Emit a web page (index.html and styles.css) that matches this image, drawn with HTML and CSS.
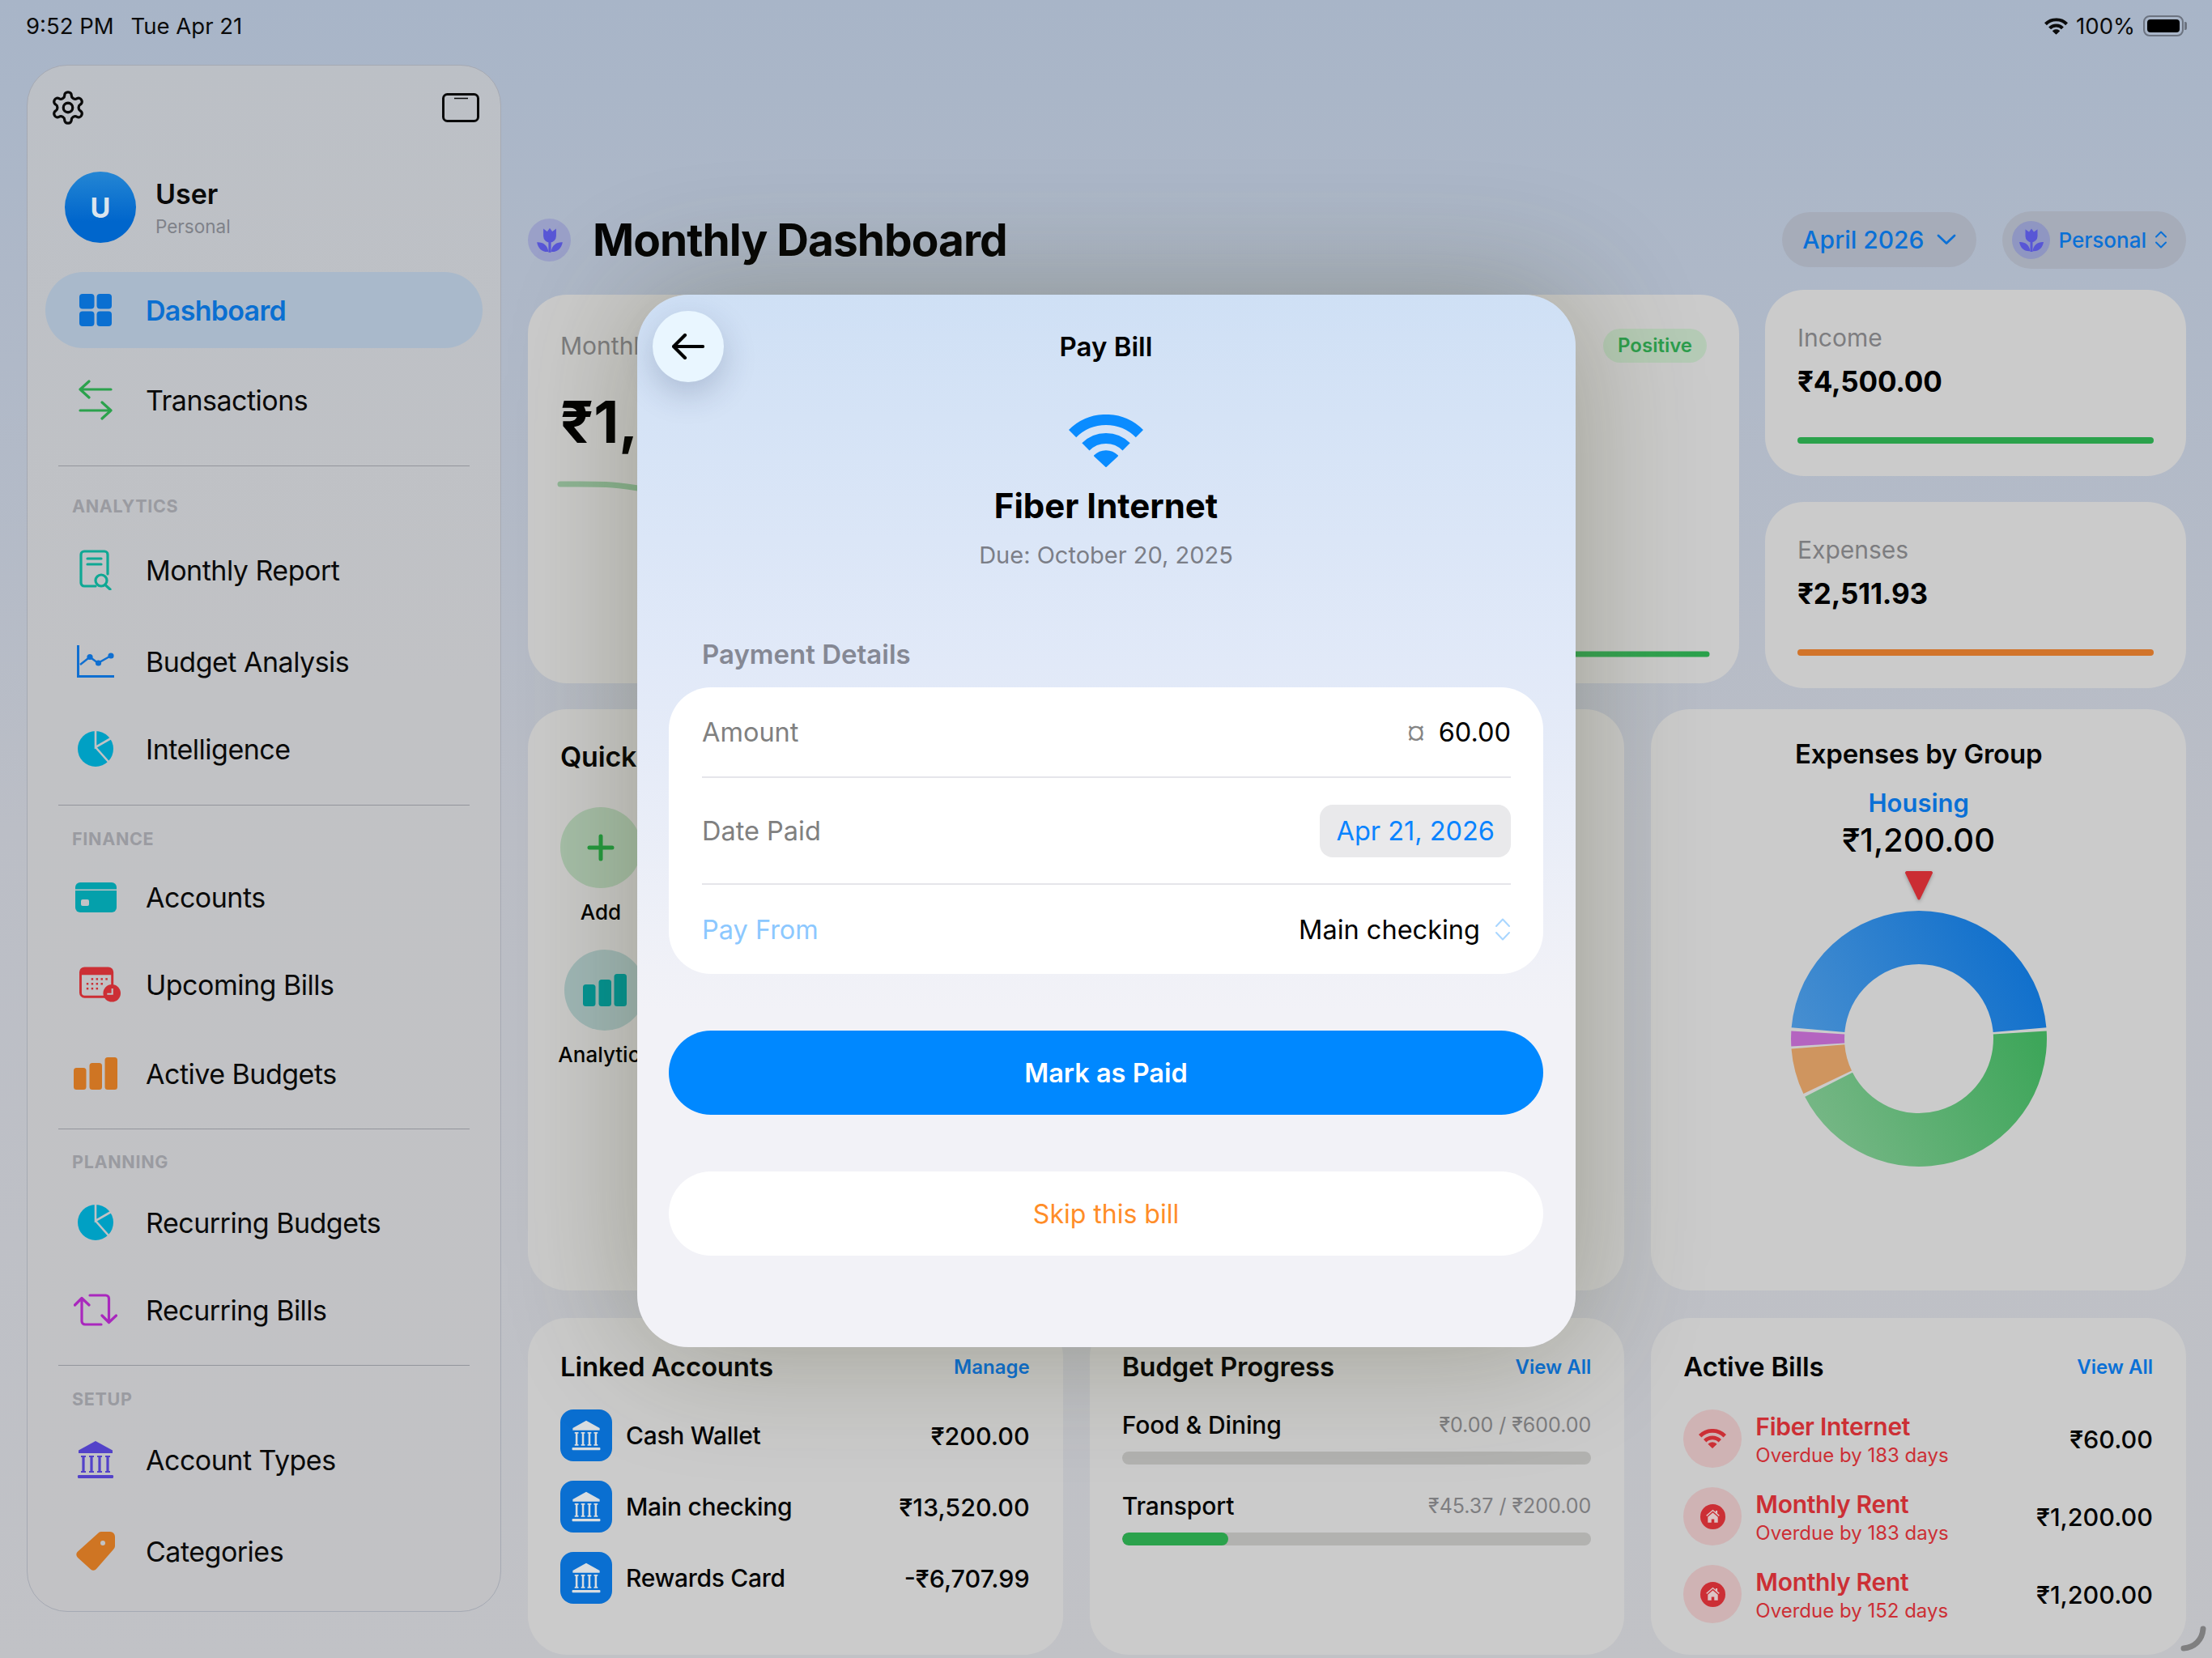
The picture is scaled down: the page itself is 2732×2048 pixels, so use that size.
FILE: index.html
```html
<!DOCTYPE html>
<html lang="en">
<head>
  <meta charset="UTF-8">
  <title>Monthly Dashboard - Pay Bill</title>
  <link rel="stylesheet" href="styles.css">
</head>
<body>

  <svg class="sprite" aria-hidden="true">
    <symbol id="wifi" viewBox="0 0 92 65">
      <path d="M4.6 23.6A58.5 58.5 0 0 1 87.4 23.6M20.9 39.9A35.5 35.5 0 0 1 71.1 39.9" fill="none" stroke="currentColor" stroke-width="13"/>
      <path d="M46 64L32 50.9A20 20 0 0 1 60 50.9Z" fill="currentColor" stroke="currentColor" stroke-width="2" stroke-linejoin="round"/>
    </symbol>
    <symbol id="tulip" viewBox="0 0 24 24">
      <path fill="currentColor" d="M7 3.5l3 2.2L12 3l2 2.7 3-2.2v5.7a5 5 0 0 1-10 0z"/>
      <rect fill="currentColor" x="11" y="13" width="2" height="9"/>
      <path fill="currentColor" d="M2 14c4.5-.3 8.300 2 9 7.5-5 .4-8-2.500-9-7.500zM22 14c-4.500-.3-8.300 2-9 7.500 5 .4 8-2.500 9-7.500z"/>
    </symbol>
    <symbol id="bank" viewBox="0 0 24 24">
      <path fill="currentColor" d="M12 .5l10.500 5.800V8H1.500V6.300z"/>
      <path fill="currentColor" d="M3 9.500h3v1H5.300v8.500H6v1H3v-1h.7v-8.500H3zM8 9.500h3v1h-.7v8.500h.7v1H8v-1h.7v-8.500H8zM13 9.500h3v1h-.7v8.500h.7v1h-3v-1h.7v-8.500H13zM18 9.500h3v1h-.7v8.500h.7v1h-3v-1h.7v-8.500H18z"/>
      <rect fill="currentColor" x="1" y="21.500" width="22" height="2" rx=".6"/>
    </symbol>
    <symbol id="pie" viewBox="0 0 44 44">
      <circle cx="22" cy="22" r="22" fill="currentColor"/>
      <path d="M22 0V20L41 9M22 20L38 38" fill="none" stroke="#c1c2c5" stroke-width="2.6"/>
    </symbol>
    <symbol id="bars" viewBox="0 0 54 40">
      <rect fill="currentColor" y="13" width="15.5" height="27" rx="3.5"/>
      <rect fill="currentColor" x="19.5" y="7" width="15.5" height="33" rx="3.5"/>
      <rect fill="currentColor" x="38.5" width="15.5" height="40" rx="3.5"/>
    </symbol>
    <symbol id="home" viewBox="0 0 30 30">
      <circle cx="15" cy="15" r="15" fill="currentColor"/>
      <path fill="#dcc4c5" d="M15 6.500l3.400 2.900V7.800h2v3.300l2.600 2.300-.9 1-7.100-6.100-7.100 6.100-.9-1zM9 15.200l6-5.100 6 5.100V22h-4.300v-4.200h-3.400V22H9z"/>
    </symbol>
  </svg>

  <div class="status-bar">
    <div class="status-left"><span>9:52 PM</span><span>Tue Apr 21</span></div>
    <div class="status-right">
      <svg class="status-wifi" viewBox="0 0 92 65"><use href="#wifi"/></svg>
      <span>100%</span>
      <div class="battery"><div class="battery-fill"></div></div>
    </div>
  </div>

  <div class="layout">

    <!-- Sidebar -->
    <aside class="sidebar">
      <div class="side-top">
        <svg class="gear" viewBox="0 0 24 24" fill="none" stroke="#0a0a0a" stroke-width="1.7" stroke-linejoin="round">
          <path d="M12.22 2h-.44a2 2 0 0 0-2 2v.18a2 2 0 0 1-1 1.73l-.43.25a2 2 0 0 1-2 0l-.15-.08a2 2 0 0 0-2.73.73l-.22.38a2 2 0 0 0 .73 2.73l.15.1a2 2 0 0 1 1 1.72v.51a2 2 0 0 1-1 1.74l-.15.09a2 2 0 0 0-.73 2.73l.22.38a2 2 0 0 0 2.73.73l.15-.08a2 2 0 0 1 2 0l.43.25a2 2 0 0 1 1 1.73V20a2 2 0 0 0 2 2h.44a2 2 0 0 0 2-2v-.18a2 2 0 0 1 1-1.73l.43-.25a2 2 0 0 1 2 0l.15.08a2 2 0 0 0 2.73-.73l.22-.39a2 2 0 0 0-.73-2.73l-.15-.08a2 2 0 0 1-1-1.74v-.5a2 2 0 0 1 1-1.74l.15-.09a2 2 0 0 0 .73-2.73l-.22-.38a2 2 0 0 0-2.73-.73l-.15.08a2 2 0 0 1-2 0l-.43-.25a2 2 0 0 1-1-1.73V4a2 2 0 0 0-2-2z"/>
          <circle cx="12" cy="12" r="3"/>
        </svg>
        <svg class="side-toggle" viewBox="0 0 46 36" fill="none" stroke="#0a0a0a">
          <rect x="1.5" y="1.5" width="43" height="33" rx="5" stroke-width="3"/>
          <path d="M15 6.5H32" stroke-width="1.5"/>
        </svg>
      </div>

      <div class="profile">
        <div class="avatar">U</div>
        <div>
          <div class="profile-name">User</div>
          <div class="profile-sub">Personal</div>
        </div>
      </div>

      <div class="nav-item nav-active">
        <div class="nav-icon">
          <svg width="40" height="40" viewBox="0 0 40 40" fill="#0a6fd1">
            <rect width="18.5" height="18.5" rx="4"/><rect x="21.5" width="18.5" height="18.5" rx="4"/>
            <rect y="21.5" width="18.5" height="18.5" rx="4"/><rect x="21.5" y="21.5" width="18.5" height="18.5" rx="4"/>
          </svg>
        </div>
        <span>Dashboard</span>
      </div>
      <div class="nav-item nav-transactions">
        <div class="nav-icon">
          <svg width="42" height="50" viewBox="0 0 42 50" fill="none" stroke="#2ba24c" stroke-width="3.2" stroke-linecap="round" stroke-linejoin="round">
            <path d="M40 12H2M13 2L2 12 13 22M2 38H40M29 28L40 38 29 48"/>
          </svg>
        </div>
        <span>Transactions</span>
      </div>

      <hr class="nav-rule nav-rule-first">
      <div class="nav-label label-analytics">ANALYTICS</div>
      <div class="nav-item">
        <div class="nav-icon">
          <svg width="40" height="50" viewBox="0 0 40 50" fill="none" stroke="#0fa894" stroke-width="3.2" stroke-linecap="round" stroke-linejoin="round">
            <path d="M20 45H6a4 4 0 0 1-4-4V6a4 4 0 0 1 4-4h25a4 4 0 0 1 4 4v24"/>
            <path d="M10 11H27M10 18H27"/>
            <circle cx="27" cy="38" r="7"/>
            <path d="M32 43.5L38 49"/>
          </svg>
        </div>
        <span>Monthly Report</span>
      </div>
      <div class="nav-item nav-gap-5">
        <div class="nav-icon">
          <svg width="46" height="40" viewBox="0 0 46 40" fill="none" stroke="#0f6fd1" stroke-width="3">
            <path d="M1.5 0V38.500H46"/>
            <path d="M4 24L16 14.500 26 22 42 13" stroke-width="2.4"/>
            <g fill="#0f6fd1" stroke="none"><circle cx="16" cy="14.500" r="3.600"/><circle cx="26.500" cy="22" r="3.600"/><circle cx="42" cy="13" r="3.600"/></g>
          </svg>
        </div>
        <span>Budget Analysis</span>
      </div>
      <div class="nav-item">
        <div class="nav-icon"><svg class="icon-pie" viewBox="0 0 44 44"><use href="#pie"/></svg></div>
        <span>Intelligence</span>
      </div>

      <hr class="nav-rule nav-rule-wide">
      <div class="nav-label label-finance">FINANCE</div>
      <div class="nav-item">
        <div class="nav-icon">
          <svg width="51" height="37" viewBox="0 0 51 37">
            <rect width="51" height="37" rx="6" fill="#04a0ab"/>
            <rect y="8.5" width="51" height="1.5" fill="#c1c2c5"/>
            <rect x="7" y="21" width="10" height="8" rx="2" fill="#c1c2c5"/>
          </svg>
        </div>
        <span>Accounts</span>
      </div>
      <div class="nav-item">
        <div class="nav-icon nav-icon-shift">
          <svg width="52" height="44" viewBox="0 0 52 44">
            <rect x="1.5" y="1.5" width="40" height="36" rx="5" fill="none" stroke="#cc2f35" stroke-width="3"/>
            <path d="M5 1.500h33a4 4 0 0 1 4 4V10H1V5.500a4 4 0 0 1 4-4z" fill="#cc2f35"/>
            <g fill="#cc2f35">
              <rect x="15" y="14" width="2.5" height="2.5"/><rect x="21" y="14" width="2.5" height="2.5"/><rect x="27" y="14" width="2.5" height="2.5"/><rect x="33" y="14" width="2.5" height="2.5"/>
              <rect x="9" y="20" width="2.5" height="2.5"/><rect x="15" y="20" width="2.5" height="2.5"/><rect x="21" y="20" width="2.5" height="2.5"/><rect x="27" y="20" width="2.5" height="2.5"/>
              <rect x="9" y="26" width="2.5" height="2.5"/><rect x="15" y="26" width="2.5" height="2.5"/><rect x="21" y="26" width="2.5" height="2.5"/>
            </g>
            <circle cx="41" cy="33" r="11" fill="#cc2f35"/>
            <path d="M41.5 27V34H35" fill="none" stroke="#c1c2c5" stroke-width="2.2"/>
          </svg>
        </div>
        <span>Upcoming Bills</span>
      </div>
      <div class="nav-item nav-gap-2">
        <div class="nav-icon"><svg class="icon-bars" viewBox="0 0 54 40"><use href="#bars"/></svg></div>
        <span>Active Budgets</span>
      </div>

      <hr class="nav-rule">
      <div class="nav-label label-planning">PLANNING</div>
      <div class="nav-item">
        <div class="nav-icon"><svg class="icon-pie" viewBox="0 0 44 44"><use href="#pie"/></svg></div>
        <span>Recurring Budgets</span>
      </div>
      <div class="nav-item">
        <div class="nav-icon">
          <svg width="54" height="40" viewBox="0 0 54 40" fill="none" stroke="#a928bd" stroke-width="3.200" stroke-linecap="round" stroke-linejoin="round">
            <path d="M1.500 14L10 5.500 19 14M10 6V34a4 4 0 0 0 4 4H34"/>
            <path d="M35 27L43.500 35.500 52.500 27M43.500 35V6a4 4 0 0 0-4-4H20"/>
          </svg>
        </div>
        <span>Recurring Bills</span>
      </div>

      <hr class="nav-rule">
      <div class="nav-label label-setup">SETUP</div>
      <div class="nav-item">
        <div class="nav-icon"><svg class="icon-bank" viewBox="0 0 24 24"><use href="#bank"/></svg></div>
        <span>Account Types</span>
      </div>
      <div class="nav-item nav-gap-5">
        <div class="nav-icon">
          <svg width="48" height="48" viewBox="0 0 48 48">
            <path fill="#cf7523" d="M32 0h10a6 6 0 0 1 6 6v12a6 6 0 0 1-2 4L25 46a5 5 0 0 1-7 .5L2 32a5 5 0 0 1-.5-7L27 2a6 6 0 0 1 5-2z"/>
            <circle cx="33" cy="14" r="3" fill="#c1c2c5"/>
          </svg>
        </div>
        <span>Categories</span>
      </div>
    </aside>

    <!-- Dashboard behind the sheet -->
    <main class="main">
      <header class="page-header">
        <div class="page-title">
          <div class="title-badge"><svg viewBox="0 0 24 24"><use href="#tulip"/></svg></div>
          <h1>Monthly Dashboard</h1>
        </div>
        <div class="header-controls">
          <div class="pill pill-month">April 2026
            <svg width="24" height="14" viewBox="0 0 24 14" fill="none" stroke="currentColor" stroke-width="2.8" stroke-linecap="round" stroke-linejoin="round"><path d="M2 2l10 9.500L22 2"/></svg>
          </div>
          <div class="pill pill-profile">
            <div class="pill-badge"><svg viewBox="0 0 24 24"><use href="#tulip"/></svg></div>
            Personal
            <svg width="16" height="24" viewBox="0 0 16 24" fill="none" stroke="currentColor" stroke-width="2" stroke-linecap="round" stroke-linejoin="round"><path d="M2 8.500L8 2.500l6 6M2 15.500l6 6 6-6"/></svg>
          </div>
        </div>
      </header>

      <section class="top-grid">
        <div class="card hero">
          <div class="hero-head">
            <div class="stat-label">Monthly Net Balance</div>
            <div class="badge-positive">Positive</div>
          </div>
          <div class="hero-value">₹1,988.07</div>
          <svg class="hero-line" viewBox="0 0 1424 218" fill="none">
            <defs>
              <linearGradient id="lineFade" x1="0" x2="1" y1="0" y2="0"><stop offset="0" stop-color="#8fb596"/><stop offset="1" stop-color="#2ba24c"/></linearGradient>
            </defs>
            <path d="M4 4C50 4 62 3 100 9C400 60 1000 214 1260 214H1420" stroke="url(#lineFade)" stroke-width="7" stroke-linecap="round"/>
          </svg>
        </div>
        <div class="stat-stack">
          <div class="card stat-card">
            <div class="stat-label">Income</div>
            <div class="stat-value">₹4,500.00</div>
            <div class="stat-bar bar-green"></div>
          </div>
          <div class="card stat-card">
            <div class="stat-label">Expenses</div>
            <div class="stat-value">₹2,511.93</div>
            <div class="stat-bar bar-orange"></div>
          </div>
        </div>
      </section>

      <section class="lower-grid">
        <div class="card quick">
          <h2>Quick</h2>
          <div class="quick-item">
            <div class="quick-circle circle-green">
              <svg width="34" height="34" viewBox="0 0 34 34" stroke="#229a3e" stroke-width="5" stroke-linecap="round"><path d="M17 3V31M3 17H31"/></svg>
            </div>
            <span>Add</span>
          </div>
          <div class="quick-item quick-item-two">
            <div class="quick-circle circle-teal"><svg width="54" height="40" viewBox="0 0 54 40" class="quick-bars"><use href="#bars"/></svg></div>
            <span>Analytics</span>
          </div>
        </div>

        <div class="card donut-card">
          <h2>Expenses by Group</h2>
          <div class="donut-name">Housing</div>
          <div class="donut-value">₹1,200.00</div>
          <svg class="donut-pointer" width="36" height="38" viewBox="0 0 36 38"><path d="M3 1h30a2 2 0 0 1 1.800 2.800L19.500 35.500a1.700 1.700 0 0 1-3 0L1.200 3.800A2 2 0 0 1 3 1z" fill="#cb2d33"/></svg>
          <svg class="donut" width="320" height="320" viewBox="0 0 320 320">
            <defs>
              <linearGradient id="gBlue" gradientUnits="userSpaceOnUse" x1="290" y1="40" x2="10" y2="190"><stop offset="0" stop-color="#0f6fcc"/><stop offset="1" stop-color="#4a90d0"/></linearGradient>
              <linearGradient id="gGreen" gradientUnits="userSpaceOnUse" x1="310" y1="170" x2="60" y2="300"><stop offset="0" stop-color="#3ea65a"/><stop offset="1" stop-color="#74b684"/></linearGradient>
            </defs>
            <path fill="url(#gBlue)" d="M2.6 146.2A158 158 0 0 1 317.4 146.2L251.65 152A92 92 0 0 0 68.35 152Z"/>
            <path fill="url(#gGreen)" d="M317.7 150.4A158 158 0 0 1 19.2 231.7L78 201.8A92 92 0 0 0 251.8 154.4Z"/>
            <path fill="#cf955f" d="M17.4 228A158 158 0 0 1 2.5 172.4L68.3 167.2A92 92 0 0 0 77 199.6Z"/>
            <path fill="#b464c0" d="M2.3 169.6A158 158 0 0 1 2.3 150.4L68.2 154.4A92 92 0 0 0 68.2 165.6Z"/>
          </svg>
        </div>

        <div class="card list-card">
          <div class="card-head"><h2>Linked Accounts</h2><a>Manage</a></div>
          <div class="account-row">
            <div class="bank-tile"><svg viewBox="0 0 24 24"><use href="#bank"/></svg></div>
            <span class="row-name">Cash Wallet</span><span class="row-amount">₹200.00</span>
          </div>
          <div class="account-row">
            <div class="bank-tile"><svg viewBox="0 0 24 24"><use href="#bank"/></svg></div>
            <span class="row-name">Main checking</span><span class="row-amount">₹13,520.00</span>
          </div>
          <div class="account-row">
            <div class="bank-tile"><svg viewBox="0 0 24 24"><use href="#bank"/></svg></div>
            <span class="row-name">Rewards Card</span><span class="row-amount">-₹6,707.99</span>
          </div>
        </div>

        <div class="card list-card">
          <div class="card-head"><h2>Budget Progress</h2><a>View All</a></div>
          <div class="budget budget-one">
            <div class="budget-top"><span class="row-name">Food &amp; Dining</span><span class="budget-amount">₹0.00 / ₹600.00</span></div>
            <div class="track"></div>
          </div>
          <div class="budget budget-two">
            <div class="budget-top"><span class="row-name">Transport</span><span class="budget-amount">₹45.37 / ₹200.00</span></div>
            <div class="track"><div class="track-fill" style="width: 22.7%"></div></div>
          </div>
        </div>

        <div class="card list-card">
          <div class="card-head"><h2>Active Bills</h2><a>View All</a></div>
          <div class="bill-row">
            <div class="bill-icon"><svg class="bill-wifi" viewBox="0 0 92 65"><use href="#wifi"/></svg></div>
            <div class="bill-text"><div class="bill-name">Fiber Internet</div><div class="bill-sub">Overdue by 183 days</div></div>
            <span class="row-amount">₹60.00</span>
          </div>
          <div class="bill-row">
            <div class="bill-icon"><svg class="bill-home" viewBox="0 0 30 30"><use href="#home"/></svg></div>
            <div class="bill-text"><div class="bill-name">Monthly Rent</div><div class="bill-sub">Overdue by 183 days</div></div>
            <span class="row-amount">₹1,200.00</span>
          </div>
          <div class="bill-row">
            <div class="bill-icon"><svg class="bill-home" viewBox="0 0 30 30"><use href="#home"/></svg></div>
            <div class="bill-text"><div class="bill-name">Monthly Rent</div><div class="bill-sub">Overdue by 152 days</div></div>
            <span class="row-amount">₹1,200.00</span>
          </div>
        </div>
      </section>
    </main>
  </div>

  <!-- Pay Bill sheet -->
  <div class="sheet">
    <button class="back-btn">
      <svg width="40" height="32" viewBox="0 0 40 32" fill="none" stroke="#000" stroke-width="4.2" stroke-linecap="round" stroke-linejoin="round"><path d="M38 16H3M16 2L2 16l14 14"/></svg>
    </button>
    <div class="sheet-title">Pay Bill</div>
    <svg class="sheet-wifi" viewBox="0 0 92 65"><use href="#wifi"/></svg>
    <div class="bill-title">Fiber Internet</div>
    <div class="bill-due">Due: October 20, 2025</div>
    <div class="section-title">Payment Details</div>

    <div class="form-card">
      <div class="form-row row-first">
        <span class="form-label">Amount</span>
        <span class="form-value"><span class="currency">¤</span>60.00</span>
      </div>
      <div class="form-row row-tall">
        <span class="form-label">Date Paid</span>
        <span class="date-pill">Apr 21, 2026</span>
      </div>
      <div class="form-row row-last">
        <span class="form-label label-tint">Pay From</span>
        <span class="form-value">Main checking
          <svg class="updown" width="20" height="30" viewBox="0 0 20 30" fill="none" stroke="#a9d6ff" stroke-width="2" stroke-linecap="round" stroke-linejoin="round"><path d="M2 11L10 2.500 18 11M2 19l8 8.500 8-8.500"/></svg>
        </span>
      </div>
    </div>

    <button class="btn btn-primary">Mark as Paid</button>
    <button class="btn btn-skip">Skip this bill</button>
  </div>

  <svg class="resize-grip" width="32" height="32" viewBox="0 0 32 32" fill="none" stroke="#7f7f80" stroke-width="7" stroke-linecap="round"><path d="M28 4C27 17 18 27 4 28"/></svg>

</body>
</html>
```

FILE: styles.css
```css
* {
  box-sizing: border-box;
}

html, body {
  margin: 0;
  height: 2048px;
  overflow: hidden;
}

body {
  position: relative;
  width: 2732px;
  font-family: "Inter", "Noto Sans", sans-serif;
  color: #000;
  background: linear-gradient(to bottom, #a8b5c8 0%, #b0b9c8 22%, #bbbec6 50%, #c1c2c6 100%);
}

.sprite {
  display: none;
}

h1, h2 {
  margin: 0;
}

/* Status bar */
.status-bar {
  height: 64px;
  padding: 0 32px;
  display: flex;
  justify-content: space-between;
  align-items: center;
  font-size: 27.5px;
  color: #0b0b0b;
}

.status-left {
  display: flex;
  gap: 21px;
}

.status-right {
  display: flex;
  align-items: center;
  gap: 10px;
}

.status-wifi {
  width: 29px;
  height: 21px;
  color: #0b0b0b;
}

.battery {
  position: relative;
  width: 50px;
  height: 26px;
  border: 2px solid #6c7380;
  border-radius: 8px;
  padding: 3px;
  margin-right: 3px;
}

.battery::after {
  content: "";
  position: absolute;
  right: -6px;
  top: 6px;
  width: 3px;
  height: 10px;
  border-radius: 0 2px 2px 0;
  background: #6c7380;
}

.battery-fill {
  height: 100%;
  background: #000;
  border-radius: 4px;
}

.layout {
  display: flex;
  gap: 33px;
  padding: 16px 32px 0 33px;
}

/* Sidebar */
.sidebar {
  flex: 0 0 586px;
  height: 1911px;
  padding: 31px 22px 0;
  border: 1px solid #a5a9b3;
  border-radius: 50px;
  background: linear-gradient(to bottom, #bcc0c6, #c1c2c5 40%, #c2c2c5);
}

.side-top {
  height: 42px;
  padding: 0 4px 0 7px;
  display: flex;
  justify-content: space-between;
  align-items: center;
}

.gear {
  width: 46px;
  height: 46px;
  margin-left: -2px;
}

.side-toggle {
  width: 46px;
  height: 36px;
}

.profile {
  margin-top: 58px;
  padding-left: 24px;
  display: flex;
  align-items: center;
  gap: 24px;
}

.avatar {
  width: 88px;
  height: 88px;
  border-radius: 50%;
  background: linear-gradient(to bottom, #2486d4, #0066cc 70%);
  color: #dbe5ee;
  font-size: 34px;
  font-weight: 700;
  display: flex;
  align-items: center;
  justify-content: center;
}

.profile-name {
  font-size: 34px;
  font-weight: 600;
  color: #0a0a0a;
  line-height: 44px;
}

.profile-sub {
  font-size: 22.5px;
  color: #7f8289;
  line-height: 30px;
  margin-top: 3px;
}

.nav-item {
  height: 108px;
  padding-left: 31px;
  display: flex;
  align-items: center;
  gap: 31px;
  font-size: 34px;
  letter-spacing: -0.5px;
  color: #0a0a0a;
}

.nav-active {
  height: 94px;
  margin-top: 36px;
  border-radius: 47px;
  background: #a9b9cb;
  color: #0a6fd1;
  font-weight: 600;
  letter-spacing: -0.7px;
}

.nav-transactions {
  margin-top: 10px;
}

.nav-gap-2 {
  margin-top: 2px;
}

.nav-gap-5 {
  margin-top: 5px;
}

.nav-icon {
  width: 62px;
  display: flex;
  justify-content: center;
  align-items: center;
}

.nav-icon-shift {
  padding-left: 11px;
}

.icon-pie {
  width: 44px;
  height: 44px;
  color: #00a0c4;
}

.icon-bars {
  width: 54px;
  height: 40px;
  color: #cf7523;
}

.icon-bank {
  width: 48px;
  height: 48px;
  color: #5342c9;
}

.nav-rule {
  margin: 14px 16px 0;
  border: 0;
  height: 1px;
  background: #93959c;
}

.nav-rule-first {
  margin-top: 27px;
}

.nav-rule-wide {
  margin-top: 15px;
}

.nav-label {
  height: 28px;
  line-height: 28px;
  margin: 27px 33px 6px;
  font-size: 21.5px;
  font-weight: 700;
  letter-spacing: 0.7px;
  color: #9a9ba1;
}

.label-analytics {
  margin-top: 35px;
  margin-bottom: 11px;
}

.label-finance {
  margin-bottom: 4px;
}

.label-planning {
  margin-top: 26px;
  margin-bottom: 7px;
}

.label-setup {
  margin-bottom: 7px;
}

/* Main column */
.main {
  flex: 1;
  min-width: 0;
}

.page-header {
  height: 80px;
  margin-top: 176px;
  display: flex;
  justify-content: space-between;
  align-items: center;
}

.page-title {
  display: flex;
  align-items: center;
  gap: 27px;
}

.title-badge {
  width: 53px;
  height: 53px;
  border-radius: 50%;
  background: #9aa0c8;
  color: #5856d6;
  display: flex;
  align-items: center;
  justify-content: center;
}

.title-badge svg {
  width: 38px;
  height: 38px;
}

h1 {
  font-size: 55px;
  font-weight: 700;
  letter-spacing: -1px;
  color: #050505;
}

.header-controls {
  display: flex;
  align-items: center;
  gap: 32px;
}

.pill {
  display: flex;
  align-items: center;
  border-radius: 36px;
  background: #a6acb9;
  color: #0a70d6;
  font-weight: 500;
}

.pill-month {
  height: 68px;
  padding: 0 25px;
  gap: 16px;
  font-size: 30px;
}

.pill-profile {
  height: 71px;
  padding: 0 23px 0 12px;
  gap: 10px;
  font-size: 26px;
}

.pill-badge {
  width: 47px;
  height: 47px;
  border-radius: 50%;
  background: #8f96c2;
  color: #5856d6;
  display: flex;
  align-items: center;
  justify-content: center;
}

.pill-badge svg {
  width: 36px;
  height: 36px;
}

.top-grid {
  margin-top: 22px;
  display: grid;
  grid-template-columns: 1496px 520px;
  gap: 32px;
}

.card {
  background: #cbcbcb;
  border-radius: 48px;
}

.hero {
  height: 480px;
  margin-top: 6px;
  padding: 42px 40px 0;
}

.hero-head {
  display: flex;
  justify-content: space-between;
  align-items: center;
}

.badge-positive {
  height: 42px;
  line-height: 42px;
  padding: 0 18px;
  border-radius: 21px;
  background: #b5cbb6;
  color: #2d9e4d;
  font-size: 24px;
  font-weight: 600;
}

.hero-value {
  margin-top: 32px;
  font-size: 72px;
  line-height: 82px;
  font-weight: 700;
  white-space: nowrap;
}

.hero-line {
  display: block;
  width: 1424px;
  height: 218px;
  margin: 32px 0 0 -4px;
}

.stat-stack {
  display: flex;
  flex-direction: column;
  gap: 32px;
}

.stat-card {
  height: 230px;
  padding: 42px 40px 0;
}

.stat-label {
  font-size: 30px;
  line-height: 34px;
  color: #7d7d80;
}

.stat-value {
  margin-top: 15px;
  font-size: 35px;
  letter-spacing: -0.2px;
  line-height: 44px;
  font-weight: 700;
}

.stat-bar {
  height: 8px;
  margin-top: 47px;
  border-radius: 4px;
}

.bar-green {
  background: #2ba24c;
}

.bar-orange {
  background: #d2742a;
}

.lower-grid {
  margin-top: 26px;
  display: grid;
  grid-template-columns: repeat(3, 1fr);
  grid-template-rows: 718px 416px;
  gap: 34px 33px;
}

h2 {
  font-size: 33px;
  font-weight: 600;
  letter-spacing: -0.2px;
  line-height: 44px;
  color: #050505;
}

.quick {
  grid-column: span 2;
  padding: 37px 40px 0;
}

.quick h2 {
  font-size: 34px;
}

.quick-item {
  display: inline-flex;
  flex-direction: column;
  align-items: center;
  margin-top: 40px;
  font-size: 26px;
  font-weight: 500;
  line-height: 34px;
  gap: 13px;
}

.quick-item-two {
  display: flex;
  width: 110px;
  margin-top: 29px;
}

.quick-circle {
  width: 100px;
  height: 100px;
  border-radius: 50%;
  display: flex;
  align-items: center;
  justify-content: center;
}

.circle-green {
  background: #a6bfa9;
}

.circle-teal {
  background: #a0b8b8;
}

.quick-bars {
  color: #019494;
}

.donut-card {
  padding-top: 33px;
  display: flex;
  flex-direction: column;
  align-items: center;
}

.donut-name {
  margin-top: 19px;
  font-size: 31px;
  line-height: 40px;
  font-weight: 600;
  color: #0a70d6;
}

.donut-value {
  margin-top: 1px;
  font-size: 40px;
  line-height: 50px;
  font-weight: 500;
}

.donut-pointer {
  margin-top: 12px;
  filter: drop-shadow(0 2px 2px rgba(0, 0, 0, 0.25));
}

.donut {
  margin-top: 10px;
}

.list-card {
  padding: 38px 41px 0 40px;
}

.card-head {
  display: flex;
  justify-content: space-between;
  align-items: center;
  margin-bottom: 31px;
}

.card-head a {
  font-size: 24px;
  font-weight: 600;
  color: #0a70d6;
}

.account-row {
  display: flex;
  align-items: center;
  height: 64px;
  margin-bottom: 24px;
}

.bank-tile {
  width: 64px;
  height: 64px;
  margin-right: 17px;
  border-radius: 16px;
  background: #0a6fd1;
  color: #d9dde0;
  display: flex;
  align-items: center;
  justify-content: center;
}

.bank-tile svg {
  width: 38px;
  height: 38px;
}

.row-name {
  flex: 1;
  font-size: 30px;
  letter-spacing: -0.3px;
  font-weight: 500;
  color: #050505;
}

.budget-top .row-name {
  letter-spacing: -0.1px;
}

.row-amount {
  font-size: 30.5px;
  font-weight: 500;
  color: #050505;
}

.budget-top {
  display: flex;
  align-items: center;
  height: 44px;
}

.budget-amount {
  font-size: 25px;
  color: #7d7d80;
}

.track {
  height: 16px;
  margin-top: 11px;
  border-radius: 8px;
  background: #b2b2b0;
  overflow: hidden;
}

.track-fill {
  height: 100%;
  border-radius: 8px;
  background: #2ba24c;
}

.budget-one {
  margin-top: -3px;
}

.budget-two {
  margin-top: 29px;
}

.bill-row {
  display: flex;
  align-items: center;
  height: 72px;
  margin-bottom: 24px;
}

.bill-icon {
  width: 72px;
  height: 72px;
  margin-right: 17px;
  border-radius: 50%;
  background: #cfb3b4;
  color: #cc2f35;
  display: flex;
  align-items: center;
  justify-content: center;
}

.bill-wifi {
  width: 34px;
  height: 24px;
}

.bill-home {
  width: 31px;
  height: 31px;
}

.bill-text {
  flex: 1;
  padding-top: 4px;
}

.bill-name {
  font-size: 30px;
  letter-spacing: -0.3px;
  line-height: 38px;
  font-weight: 600;
  color: #cc2f35;
}

.bill-sub {
  font-size: 24px;
  line-height: 34px;
  color: #cc2f35;
}

/* Pay Bill sheet */
.sheet {
  position: absolute;
  left: 787px;
  top: 364px;
  width: 1159px;
  height: 1300px;
  padding: 0 40px 0 39px;
  border-radius: 64px;
  background: linear-gradient(to bottom, #cfe0f5 0%, #e1e9f8 35%, #f2f2f7 68%);
  box-shadow: 0 0 160px rgba(60, 60, 20, 0.32);
  display: flex;
  flex-direction: column;
  align-items: center;
}

.back-btn {
  position: absolute;
  left: 19px;
  top: 20px;
  width: 88px;
  height: 88px;
  padding: 0;
  border: 0;
  border-radius: 50%;
  background: #e9f6ff;
  box-shadow: 0 14px 40px rgba(30, 50, 90, 0.22);
  display: flex;
  align-items: center;
  justify-content: center;
}

.sheet-title {
  height: 128px;
  line-height: 128px;
  font-size: 33px;
  font-weight: 600;
}

.sheet-wifi {
  width: 92px;
  height: 65px;
  margin-top: 20px;
  color: #0a8cff;
}

.bill-title {
  margin-top: 20px;
  font-size: 42px;
  line-height: 56px;
  font-weight: 700;
}

.bill-due {
  margin-top: 13px;
  font-size: 29px;
  line-height: 40px;
  color: #7b7e87;
}

.section-title {
  align-self: flex-start;
  margin: 80px 0 19px 41px;
  font-size: 33px;
  line-height: 44px;
  font-weight: 600;
  color: #858894;
}

.form-card {
  align-self: stretch;
  height: 354px;
  padding: 0 40px 0 41px;
  border-radius: 52px;
  background: #fff;
}

.form-row {
  display: flex;
  justify-content: space-between;
  align-items: center;
  border-bottom: 2px solid #e5e5ea;
  font-size: 32.5px;
}

.row-first {
  height: 112px;
}

.row-tall {
  height: 132px;
}

.row-last {
  height: 110px;
  border-bottom: 0;
}

.form-label {
  color: #808080;
}

.label-tint {
  color: #8cc8ff;
}

.form-value {
  display: flex;
  align-items: center;
  color: #000;
}

.currency {
  margin-right: 17px;
  font-size: 30px;
  color: #858585;
}

.date-pill {
  height: 65px;
  line-height: 65px;
  padding: 0 20px;
  border-radius: 16px;
  background: #e9e9eb;
  color: #0a84ff;
}

.updown {
  margin-left: 18px;
}

.btn {
  align-self: stretch;
  height: 104px;
  margin-top: 70px;
  border: 0;
  border-radius: 52px;
  font-family: inherit;
  font-size: 32.5px;
}

.btn-primary {
  background: #0088ff;
  color: #fff;
  font-weight: 600;
}

.btn-skip {
  background: #fff;
  font-size: 32px;
  color: #ff8d28;
}

.resize-grip {
  position: absolute;
  left: 2693px;
  top: 2008px;
}
```
